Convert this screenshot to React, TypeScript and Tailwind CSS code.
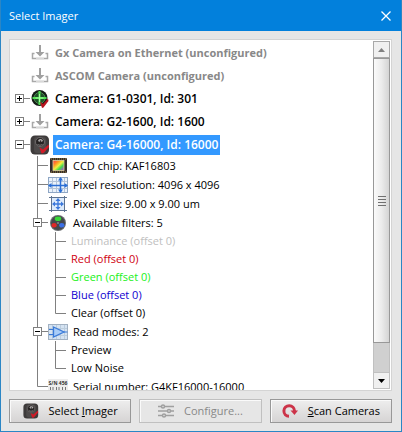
import React, { useState } from 'react';
import clsx from 'clsx';

type IconName = 'download' | 'target' | 'camera' | 'chip' | 'resolution' | 'size' | 'filters' | 'read' | 'serial';

interface Row {
    text: string;
    level: 1 | 2 | 3;
    icon?: IconName;
    toggle?: 'open' | 'closed';
    group?: string;
    tone?: string;
    selected?: boolean;
    last?: boolean;
}

const rows: Row[] = [
    { level: 1, icon: 'download', text: 'Gx Camera on Ethernet (unconfigured)', tone: 'text-[#888888] text-[11px] font-bold' },
    { level: 1, icon: 'download', text: 'ASCOM Camera (unconfigured)', tone: 'text-[#888888] text-[11px] font-bold' },
    { level: 1, icon: 'target', text: 'Camera: G1-0301, Id: 301', toggle: 'closed', tone: 'text-[12px] font-semibold' },
    { level: 1, icon: 'download', text: 'Camera: G2-1600, Id: 1600', toggle: 'closed', tone: 'text-[12px] font-semibold' },
    { level: 1, icon: 'camera', text: 'Camera: G4-16000, Id: 16000', toggle: 'open', selected: true, tone: 'text-[12px] font-semibold' },
    { level: 2, icon: 'chip', text: 'CCD chip: KAF16803' },
    { level: 2, icon: 'resolution', text: 'Pixel resolution: 4096 x 4096' },
    { level: 2, icon: 'size', text: 'Pixel size: 9.00 x 9.00 um' },
    { level: 2, icon: 'filters', text: 'Available filters: 5', toggle: 'open' },
    { level: 3, group: 'Available filters: 5', text: 'Luminance (offset 0)', tone: 'text-[#c0c0c0]' },
    { level: 3, group: 'Available filters: 5', text: 'Red (offset 0)', tone: 'text-[#d00010]' },
    { level: 3, group: 'Available filters: 5', text: 'Green (offset 0)', tone: 'text-[#20f020]' },
    { level: 3, group: 'Available filters: 5', text: 'Blue (offset 0)', tone: 'text-[#1000d0]' },
    { level: 3, group: 'Available filters: 5', text: 'Clear (offset 0)', last: true },
    { level: 2, icon: 'read', text: 'Read modes: 2', toggle: 'open' },
    { level: 3, group: 'Read modes: 2', text: 'Preview' },
    { level: 3, group: 'Read modes: 2', text: 'Low Noise', last: true },
    { level: 2, icon: 'serial', text: 'Serial number: G4KF16000-16000', last: true },
];

const Download = () => (
    <svg width="20" height="20" viewBox="0 0 20 20" fill="none">
        <path d="M9 2h2v7h3.500L10 13.500 5.500 9H9z" fill="#a0a0a0" />
        <path d="M4.500 10.500H2.500v5h15v-5h-2" stroke="#a8a8a8" strokeWidth="1.500" />
        <path d="M6 15.500h8" stroke="#d8d8d8" strokeWidth="1.500" />
    </svg>
);

const Target = () => (
    <svg width="20" height="20" viewBox="0 0 20 20" fill="none">
        <circle cx="9.500" cy="9" r="8" fill="#141c16" />
        <circle cx="9.500" cy="9" r="5.500" fill="#21512a" stroke="#4d8a52" strokeWidth="1" />
        <path d="M9.500 2v14M2.500 9h14" stroke="#4fe04f" strokeWidth="2" />
        <path d="M9.500 5v8M5.500 9h8" stroke="#a4ffa0" strokeWidth="1" />
        <path d="M10 12.500l3 2.500L18 9.500l.5 2.500-5 6.500-1.500.5z" fill="#b8141f" />
    </svg>
);

const Camera = ({ size = 20 }: { size?: number }) => (
    <svg width={size} height={size} viewBox="0 0 20 20" fill="none">
        <rect x=".5" y=".5" width="18.500" height="19" rx="4.500" fill="#3e3b3b" />
        <rect x="4" y="2" width="12" height="16" rx="3" fill="#4d4a4a" />
        <circle cx="10" cy="7" r="4.500" fill="#262323" stroke="#777373" strokeWidth=".8" />
        <ellipse cx="10.500" cy="5.500" rx="2.200" ry="1.500" fill="#b9b5b5" />
        <circle cx="10.500" cy="6.200" r=".9" fill="#302d2d" />
        <path d="M7.500 9.500q2.500 1.500 5 0" stroke="#8d8989" strokeWidth=".8" />
        <path d="M9.500 12.500l3.500 2L18.500 9.500 19 12l-5.500 6-2 .5z" fill="#d01a26" />
    </svg>
);

const Chip = () => (
    <svg width="20" height="18" viewBox="0 0 20 18">
        <defs>
            <linearGradient id="chip" x1="0" y1="0" x2="1" y2="1">
                <stop offset="0" stopColor="#ff3050" />
                <stop offset=".3" stopColor="#ff9a20" />
                <stop offset=".5" stopColor="#f0f040" />
                <stop offset=".7" stopColor="#40d850" />
                <stop offset="1" stopColor="#c030e8" />
            </linearGradient>
        </defs>
        <rect x="2" y="1" width="17" height="15" rx="1" fill="#332b2b" />
        <path d="M3 2h15M3 15h15" stroke="#a89040" strokeDasharray="1 1" />
        <rect x="5" y="3.500" width="11" height="10" fill="url(#chip)" stroke="#ded3a0" strokeWidth=".8" />
    </svg>
);

const Resolution = () => (
    <svg width="20" height="18" viewBox="0 0 20 18" fill="none">
        <rect x=".5" y="1.500" width="19" height="15" fill="#eaf2fb" stroke="#8ea6c4" />
        <path d="M4.500 2v14M8.500 2v14M16.500 2v14M1 5.500h18M1 12.500h18" stroke="#b4c4d8" />
        <path d="M12.500 2v14M1 9.500h18" stroke="#2b6fd6" strokeWidth="1.500" />
        <path d="M12.500 1l2.500 3.500h-5zM12.500 17l2.500-3.500h-5zM0 9.500L3.500 7v5zM20 9.500L16.500 7v5z" fill="#2b6fd6" />
    </svg>
);

const Size = () => (
    <svg width="20" height="18" viewBox="0 0 20 18" fill="none">
        <rect x="3" y="2" width="14" height="14" fill="#dceafb" />
        <path d="M1 2.500h18M1 15.500h18M3.500 1v16M16.500 1v16" stroke="#5e7390" />
        <path d="M10 5v8M6 9h8" stroke="#3b78dc" strokeWidth="1.300" />
        <path d="M10 3l2.500 3h-5zM10 15l2.500-3h-5zM4 9l3-2.500v5zM16 9l-3-2.500v5z" fill="#3b78dc" />
    </svg>
);

const Filters = () => (
    <svg width="20" height="18" viewBox="0 0 20 18">
        <circle cx="10" cy="9" r="8" fill="#6a6d70" />
        <circle cx="10" cy="9" r="7" fill="#45484c" />
        <ellipse cx="10" cy="4.700" rx="3.300" ry="2.300" fill="#38d838" />
        <ellipse cx="6.200" cy="11.300" rx="2.600" ry="2.300" fill="#e02828" />
        <ellipse cx="13.800" cy="11.300" rx="2.600" ry="2.300" fill="#3c70e8" />
        <circle cx="10" cy="9" r="1" fill="#85888c" />
    </svg>
);

const ReadMode = () => (
    <svg width="20" height="18" viewBox="0 0 20 18" fill="none">
        <rect x=".5" y="1.500" width="19" height="15" fill="#d5e3f2" stroke="#a2b1c2" />
        <path d="M4.500 2v14M8.500 2v14M12.500 2v14M16.500 2v14M1 5.500h18M1 12.500h18" stroke="#bccddd" />
        <path d="M5.500 4l10.500 5-10.500 5z" fill="#a9cdf8" stroke="#3a7ad8" strokeWidth="1.300" />
        <path d="M1 6.500h4.500M1 11.500h4.500M16 9h3.500" stroke="#3a7ad8" />
    </svg>
);

const Serial = () => (
    <svg width="20" height="18" viewBox="0 0 20 18">
        <rect x="0" y="1" width="20" height="17" fill="#ededed" />
        <text x="10" y="7" fontSize="5" fontWeight="700" textAnchor="middle" fill="#333333">S/N 456</text>
        <path d="M2.500 9v8M5 9v8M8.500 9v8M11 9v8M14.500 9v8M17.500 9v8" stroke="#777777" />
    </svg>
);

const icons: Record<IconName, React.ComponentType> = {
    download: Download,
    target: Target,
    camera: Camera,
    chip: Chip,
    resolution: Resolution,
    size: Size,
    filters: Filters,
    read: ReadMode,
    serial: Serial,
};

const Box = ({ x, y, open }: { x: number; y: number; open: boolean }) => (
    <g>
        <rect x={x - 4} y={y - 4} width="8" height="8" fill="#ffffff" stroke="#808080" />
        <path d={`M${x - 2.5} ${y}h5${open ? '' : `M${x} ${y - 2.5}v5`}`} stroke="#000000" />
    </g>
);

// Tree lines in front of a row, with the +/- box where the row has children
const Branch = ({ row, open }: { row: Row; open: boolean }) => {
    if (row.level === 1) {
        return (
            <svg width="20" height="23" viewBox="0 0 20 23">
                {row.toggle && <path d="M14 11.500h6" stroke="#808080" />}
                {row.toggle && <Box x={9.5} y={11.5} open={open} />}
            </svg>
        );
    }
    if (row.level === 2) {
        return (
            <svg width="38" height="19" viewBox="0 0 38 19">
                <path d={row.last ? 'M27.500 0v9.500H38' : 'M27.500 0v19M27 9.500h11'} fill="none" stroke="#808080" />
                {row.toggle && <Box x={27.5} y={9.5} open={open} />}
            </svg>
        );
    }
    return (
        <svg width="56" height="18" viewBox="0 0 56 18">
            <path d={row.last ? 'M45.500 0v9.500H56' : 'M45.500 0v18M45 9.500h11'} fill="none" stroke="#808080" />
            <path d="M27.500 0v18" stroke="#808080" />
        </svg>
    );
};

const TreeRow = ({ row, open, onToggle }: { row: Row; open: boolean; onToggle: () => void }) => {
    const Icon = row.icon ? icons[row.icon] : null;

    return (
        <li
            className={clsx('flex shrink-0 items-center', {
                'h-[23px]': row.level === 1,
                'h-[19px]': row.level === 2,
                'h-[18px]': row.level === 3,
            })}
        >
            {row.toggle ? (
                <button type="button" aria-label={row.text} aria-expanded={open} onClick={onToggle} className="shrink-0">
                    <Branch row={row} open={open} />
                </button>
            ) : (
                <span className="shrink-0"><Branch row={row} open={open} /></span>
            )}
            {Icon && <span className="w-5 shrink-0"><Icon /></span>}
            <span
                className={clsx('ml-[3px] whitespace-nowrap px-0.5', row.tone, {
                    'bg-[#3399ff] py-0.5 text-white': row.selected,
                })}
            >
                {row.text}
            </span>
        </li>
    );
};

const ScrollBar = () => (
    <div className="my-px mr-px flex w-[17px] shrink-0 flex-col bg-[#d0d0d0]">
        <button type="button" aria-label="Scroll up" className="flex h-[17px] items-center justify-center border border-[#a8a8a8] bg-[#f0f0f0]">
            <svg width="7" height="4" viewBox="0 0 7 4"><path d="M0 4l3.500-4L7 4z" fill="#808080" /></svg>
        </button>
        <div className="flex flex-[286] flex-col items-center justify-center gap-0.5 border border-[#989898] bg-linear-to-r from-[#fafafa] via-[#ececec] to-[#d4d4d4]">
            <span className="h-px w-2 bg-[#707070]" />
            <span className="h-px w-2 bg-[#707070]" />
            <span className="h-px w-2 bg-[#707070]" />
            <span className="h-px w-2 bg-[#707070]" />
        </div>
        <div className="flex-[29] border-x border-[#c0c0c0]" />
        <button type="button" aria-label="Scroll down" className="flex h-[17px] items-center justify-center border border-[#c0c0c0] bg-[#f0f0f0]">
            <svg width="7" height="4" viewBox="0 0 7 4"><path d="M0 0h7L3.500 4z" fill="#000000" /></svg>
        </button>
    </div>
);

const buttonClass = 'flex h-6 items-center justify-center gap-2.5 border border-[#989898] bg-linear-to-b from-[#eeeeee] to-[#d6d4d4] whitespace-nowrap text-black inset-shadow-[1px_1px_0_#fafafa] disabled:border-[#c0c0c0] disabled:bg-none disabled:text-[#888888]';

const App = () => {
    const [closed, setClosed] = useState<string[]>(rows.filter(r => r.toggle === 'closed').map(r => r.text));

    const toggle = (id: string) => {
        setClosed(prev => (prev.includes(id) ? prev.filter(c => c !== id) : [...prev, id]));
    };

    const root = rows.find(r => r.selected)!.text;
    const visible = rows.filter(r => {
        if (r.level === 1) return true;
        return !closed.includes(root) && !(r.group && closed.includes(r.group));
    });

    return (
        <main className="flex h-screen flex-col border-x border-b border-[#2b86c5] bg-[#e6e6e6] font-['Open_Sans','Noto_Sans',sans-serif] text-[11px] leading-4 text-black">
            <header className="flex h-[31px] shrink-0 items-center justify-between bg-[#0280dc] pr-2.5 pl-2 text-white">
                <h1>Select Imager</h1>
                <button type="button" aria-label="Close">
                    <svg width="10" height="10" viewBox="0 0 10 10" stroke="currentColor" strokeWidth="1.300"><path d="M.5.5l9 9M9.500.5l-9 9" /></svg>
                </button>
            </header>
            <div className="flex min-h-0 flex-1 flex-col gap-2 py-2 pr-[9px] pl-2">
                <div className="flex min-h-0 flex-1 border border-[#d4d4d4] bg-white">
                    <ul className="mt-px flex min-w-0 flex-1 flex-col overflow-hidden">
                        {visible.map(row => (
                            <TreeRow key={row.text} row={row} open={!closed.includes(row.text)} onToggle={() => toggle(row.text)} />
                        ))}
                    </ul>
                    <ScrollBar />
                </div>
                <div className="grid shrink-0 grid-cols-3 gap-2">
                    <button type="button" className={buttonClass}>
                        <Camera size={16} />
                        <span>Select <u>I</u>mager</span>
                    </button>
                    <button type="button" disabled className={buttonClass}>
                        <svg width="16" height="14" viewBox="0 0 16 14" fill="#e6e6e6" stroke="#a0a0a0" strokeWidth="1.500">
                            <path d="M0 2.500h16M0 7h16M0 11.500h16" />
                            <circle cx="5" cy="2.500" r="1.500" />
                            <circle cx="11" cy="7" r="1.500" />
                            <circle cx="6" cy="11.500" r="1.500" />
                        </svg>
                        <span>Configure...</span>
                    </button>
                    <button type="button" className={buttonClass}>
                        <svg width="16" height="16" viewBox="0 0 16 16" fill="none">
                            <path d="M7 13.300A5.300 5.300 0 1 1 12.500 8" stroke="#cc3348" strokeWidth="3" />
                            <path d="M8.500 7.500H16L12.500 12z" fill="#cc3348" />
                        </svg>
                        <span><u>S</u>can Cameras</span>
                    </button>
                </div>
            </div>
        </main>
    );
};

export default App;
